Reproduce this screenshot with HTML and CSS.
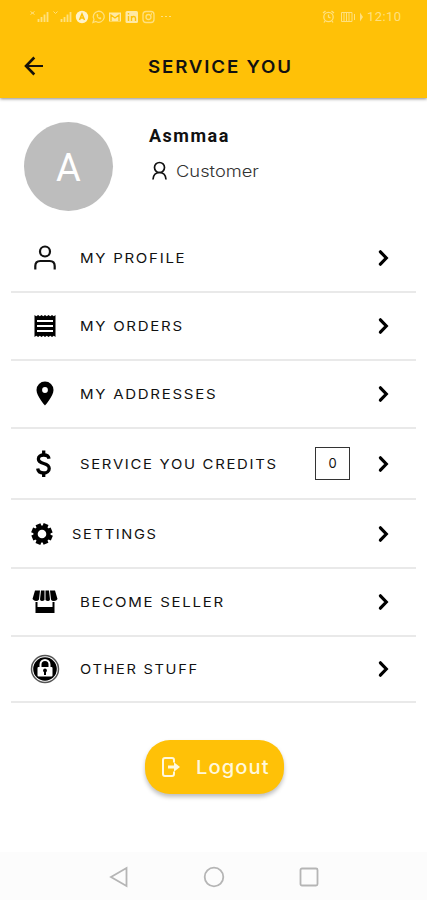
FILE: index.html
```html
<!DOCTYPE html>
<html lang="en">
<head>
<meta charset="utf-8">
<title>Service You</title>
<link rel="stylesheet" href="styles.css">
</head>
<body>
<svg class="defs" width="0" height="0"><symbol id="chev" viewBox="0 0 12 18"><path d="M2.400 2.800 8.300 9l-5.900 6.200" fill="none" stroke="#000" stroke-width="3.200" stroke-linecap="round"/></symbol></svg>
<header class="top">
  <div class="status">
    <svg class="status-left" width="146" height="16" viewBox="0 0 146 16" fill="none" stroke="#ffe07f" stroke-width="1.3">
      <path d="M1.500 3.500l4 3m0-3-4 3M24.500 3.500l2 2 2-2" stroke-width="1"/>
      <path d="M9.500 14v-3M12.500 14V9M15.500 14V6.500M18.500 14V4M32.500 14v-3M35.500 14V9M38.500 14V6.500M41.500 14V4" stroke-width="1.8"/>
      <circle cx="53" cy="9" r="6.200" fill="#fff3c8" stroke="none"/><path d="M50.500 12 53 6l2.500 6M51.500 10h3" stroke="#ffc107" stroke-width="1.500"/>
      <path d="M64 14.500l1-3a5.500 5.500 0 1 1 2 2z"/><path d="M67.500 6.500c0 3 2 4.500 4 5l1-1.500-1.500-1-1 .8-1.200-1.500.7-1-1-1.500z" fill="#ffe07f" stroke="none"/>
      <path d="M80 4.500h12v9H80z" fill="#ffe9a3" stroke="none"/><path d="M82 13V7l4 3 4-3v6" stroke="#ffc107"/>
      <rect x="96.500" y="3" width="12.500" height="12" rx="1.500" fill="#ffe9a3" stroke="none"/><path d="M99.500 8v5M99.500 5v1.500M102.500 13V8M102.500 10c1-2 4-2 4 .5V13" stroke="#ffc107" stroke-width="1.400"/>
      <rect x="114" y="3.500" width="11" height="11" rx="3"/><circle cx="119.500" cy="9" r="2.500"/><path d="M122 6h1"/>
      <path d="M132 8.500h2M136 8.500h2M140 8.500h2" stroke-width="1.200"/>
    </svg>
    <div class="status-right">
      <svg width="46" height="16" viewBox="0 0 46 16" fill="none" stroke="#ffe07f" stroke-width="1.300">
        <circle cx="7.500" cy="9" r="4.700"/><path d="M7.500 6.500V9l2 1M2 5l2.500-2M13 5l-2.500-2M4 13l-1 1.500M11 13l1 1.500"/>
        <path d="M20.500 4.500H31v9H20.500zM23 5v8M25.500 5v8M28 5v8M33.500 6v6" stroke-width="1"/><path d="M39 4.500v9l3-4.500z" fill="#ffe07f" stroke="none"/>
      </svg>
      <span class="clock">12:10</span>
    </div>
  </div>
  <div class="bar">
    <svg class="back" width="20" height="20" viewBox="0 0 20 20" fill="none" stroke="#17120a"><path d="M10.300 1.500 2 10l8.300 8.500" stroke-width="2.600"/><path d="M2 10h17" stroke-width="2"/></svg>
    <h1 class="title">SERVICE YOU</h1>
  </div>
</header>
<main>
  <section class="user">
    <div class="avatar">A</div>
    <div class="info">
      <div class="name">Asmmaa</div>
      <div class="role">
        <svg width="16" height="20" viewBox="0 0 16 20" fill="none" stroke="#111" stroke-width="1.700"><circle cx="7.500" cy="6.500" r="5"/><path d="M1 18.500c.3-4.500 2.800-7 6.500-7s6.200 2.500 6.500 7"/></svg>
        <span class="customer">Customer</span>
      </div>
    </div>
  </section>
  <nav class="menu">
    <a class="row r1">
      <svg class="icon" width="30" height="30" viewBox="0 0 30 30" fill="none" stroke="#111" stroke-width="2.200"><circle cx="15" cy="8.500" r="5"/><path d="M5.300 26.500V23c0-3.500 2-5 5-5h9.400c3 0 5 1.500 5 5v3.500"/></svg>
      <span class="label profile">MY PROFILE</span>
      <svg class="chev"><use href="#chev"/></svg>
    </a>
    <a class="row r2">
      <svg class="icon" width="30" height="30" viewBox="0 0 30 30"><path d="M4.500 4l1.800 1.200L8.100 4l1.700 1.200L11.500 4l1.800 1.200L15 4l1.800 1.200L18.500 4l1.800 1.200L22 4l1.800 1.200L25.500 4v22l-1.700-1.200L22 26l-1.700-1.200-1.800 1.200-1.700-1.200L15 26l-1.700-1.200-1.800 1.200-1.700-1.200L8.100 26l-1.800-1.200L4.500 26z"/><path d="M7 10h16M7 15h16M7 20h16" stroke="#fff" stroke-width="2"/></svg>
      <span class="label orders">MY ORDERS</span>
      <svg class="chev"><use href="#chev"/></svg>
    </a>
    <a class="row r3">
      <svg class="icon" width="30" height="30" viewBox="0 0 30 30"><path fill-rule="evenodd" d="M15 2.500a8.500 8.500 0 0 0-8.500 8.500C6.500 17 15 26.500 15 26.500s8.500-9.500 8.500-15.500A8.500 8.500 0 0 0 15 2.500zm0 5.600a2.900 2.900 0 1 1 0 5.800 2.900 2.900 0 0 1 0-5.800z"/></svg>
      <span class="label addresses">MY ADDRESSES</span>
      <svg class="chev"><use href="#chev"/></svg>
    </a>
    <a class="row r4">
      <svg class="icon" width="30" height="30" viewBox="0 0 30 30" fill="none" stroke="#000" stroke-width="3.300"><path d="M19 9.700C18.700 7.200 16.500 6 13.700 6c-3.200 0-5.300 1.700-5.300 4 0 2.600 2.400 3.700 5.300 4.500 3.400.900 5.500 2.200 5.500 5s-2.400 4.500-5.500 4.500-5.700-1.500-6-4.500"/><path d="M13.700 1.500v5M13.700 23v5"/></svg>
      <span class="label credits">SERVICE YOU CREDITS</span>
      <span class="count">0</span>
      <svg class="chev"><use href="#chev"/></svg>
    </a>
    <a class="row r5">
      <svg class="icon gear" width="24" height="24" viewBox="0 0 24 24"><g stroke="#000" stroke-width="5.200"><path d="M12 1.300v21.400M1.300 12h21.400M4.600 4.600l14.800 14.800M19.400 4.600 4.600 19.400" transform="rotate(22.500 12 12)"/></g><circle cx="12" cy="12" r="8.600"/><circle cx="12" cy="12" r="4.300" fill="#fff"/></svg>
      <span class="label settings">SETTINGS</span>
      <svg class="chev"><use href="#chev"/></svg>
    </a>
    <a class="row r6">
      <svg class="icon" width="30" height="30" viewBox="0 0 30 30"><path d="M5 3.500h5l-1 9q-1 1.500-3 1.500T2.500 12zM11 3.500h3.500v9.500q-1 1-2.500 1t-2-1.500zM15.500 3.500H19l1 9q-.5 1.500-2 1.500t-2.500-1zM20 3.500h5l2.500 8.500q-1 2-3.500 2T21 12.500z"/><path d="M5.500 15h2v5h15v-5h2v11h-19z"/></svg>
      <span class="label seller">BECOME SELLER</span>
      <svg class="chev"><use href="#chev"/></svg>
    </a>
    <a class="row r7">
      <svg class="icon" width="30" height="30" viewBox="0 0 30 30"><circle cx="15" cy="15" r="13.500" fill="#fff" stroke="#555" stroke-width="1.500"/><circle cx="15" cy="15" r="11.800"/><path d="M10.500 13v-2.500a4.500 4.500 0 0 1 9 0V13" fill="none" stroke="#fff" stroke-width="2"/><rect x="7.500" y="13" width="15" height="9.500" rx="1" fill="#fff"/><circle cx="15" cy="16.500" r="1.900"/><path d="M14 17h2v4h-2z"/></svg>
      <span class="label other">OTHER STUFF</span>
      <svg class="chev"><use href="#chev"/></svg>
    </a>
  </nav>
  <button class="logout">
    <svg width="20" height="22" viewBox="0 0 20 22" fill="none" stroke="#fff8dc" stroke-width="2"><path d="M13 6.500V4q0-2-2-2H4Q2 2 2 4v14q0 2 2 2h7q2 0 2-2v-2.500"/><path d="M7 11h7" stroke-width="3"/><path d="M13 6.300 19 11l-6 4.700z" fill="#fff8dc" stroke="none"/></svg>
    <span class="logout-text">Logout</span>
  </button>
</main>
<footer class="nav">
  <svg width="22" height="22" viewBox="0 0 22 22"><path d="M3 11 18.500 2v18z"/></svg>
  <svg width="22" height="22" viewBox="0 0 22 22"><circle cx="11" cy="11" r="9.300"/></svg>
  <svg width="22" height="22" viewBox="0 0 22 22"><rect x="2.500" y="2.500" width="17" height="17" rx="1.500"/></svg>
</footer>
</body>
</html>
```
FILE: styles.css
```css
* { box-sizing: border-box; }
body { margin: 0; height: 900px; display: flex; flex-direction: column; background: #fff; color: #111; font-family: Inter, "Liberation Sans", sans-serif; overflow: hidden; }
svg { display: block; flex: none; }
.defs { position: absolute; }
.top { height: 98px; flex: none; background: #ffc107; box-shadow: 0 1px 3px rgba(0,0,0,.45); }
.status { height: 34px; padding: 8px 25px 0 29px; display: flex; justify-content: space-between; align-items: flex-start; }
.status-right { display: flex; color: #ffe07f; }
.clock { font: 13px/18px Roboto, sans-serif; letter-spacing: .45px; width: 35px; white-space: nowrap; }
.bar { height: 64px; display: flex; align-items: center; padding-left: 24px; }
.title { margin: 2px 0 0 104px; font-size: 17.5px; font-weight: 600; line-height: 24px; letter-spacing: 1.7px; white-space: nowrap; transform: scaleX(1.07); transform-origin: left; }
.user { height: 127px; padding: 24px 24px 0; display: flex; }
.avatar { width: 89px; height: 89px; border-radius: 50%; background: #bdbdbd; color: #fff; font-family: Roboto, sans-serif; font-size: 38px; line-height: 93px; text-align: center; }
.info { margin: 1px 0 0 37px; }
.name { font: 700 18px/26px Roboto, sans-serif; letter-spacing: 1.5px; margin-left: -1px; }
.role { display: flex; align-items: center; gap: 8px; height: 20px; margin: 12px 0 0 2px; }
.customer { font-size: 16px; font-weight: 300; color: #333; transform: scaleX(1.145); transform-origin: left; }
.menu { margin: 0 11px; }
.row { display: flex; align-items: center; border-bottom: 2px solid #e9e9e9; padding: 0 26px 0 19px; height: 68px; }
.r4 { height: 71px; }
.r5 { height: 69px; }
.r6 { height: 68px; }
.r7 { height: 66px; }
.icon { margin-right: 20px; }
.gear { margin-right: 18px; }
.label { font-size: 13.2px; line-height: 20px; white-space: nowrap; letter-spacing: 1.5px; transform: scaleX(1.14); transform-origin: left; }
.credits { transform: scaleX(1.128); }
.settings, .other { transform: scaleX(1.11); }
.chev { width: 12px; height: 18px; margin-left: auto; }
.count { width: 35px; height: 33px; margin-left: auto; border: 1px solid #333; font-size: 13px; line-height: 31px; text-align: center; }
.count + .chev { margin-left: 28px; }
.logout { display: flex; align-items: center; width: 139px; height: 54px; margin: 37px 0 0 145px; padding: 0 0 0 16px; border: 0; border-radius: 25px; background: #ffc107; box-shadow: 0 3px 4px rgba(0,0,0,.25); color: #fff8dc; font-family: inherit; }
.logout-text { margin-left: 15px; font-size: 18.5px; font-weight: 500; letter-spacing: 1px; transform: scaleX(1.09); transform-origin: left; }
.nav { height: 48px; margin-top: auto; padding-top: 1px; flex: none; background: #fcfcfc; display: flex; justify-content: center; align-items: center; gap: 73px; }
.nav svg { fill: none; stroke: #b5b5b5; stroke-width: 1.8; }
```
